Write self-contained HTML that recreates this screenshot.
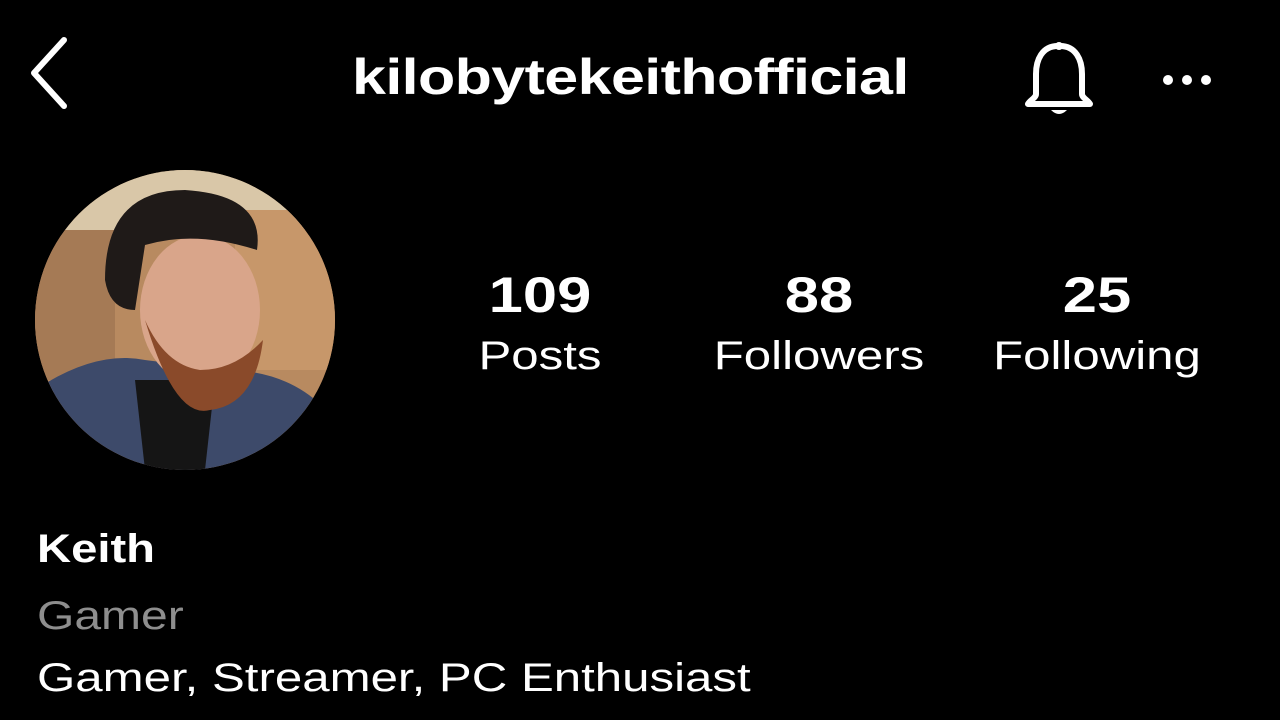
<!DOCTYPE html>
<html><head><meta charset="utf-8"><style>
body{margin:0;width:1280px;height:720px;background:#000;overflow:hidden;font-family:"Liberation Sans",sans-serif;color:#fff;position:relative}
.a{position:absolute;white-space:nowrap}
.s{transform:scaleX(1.22);transform-origin:0 0}
.c{transform:scaleX(1.23);transform-origin:50% 0}
.t{font-weight:bold;font-size:50px;left:352px;top:48px;letter-spacing:-0.5px}
.n{font-weight:bold;font-size:50px;top:266px;text-align:center;width:240px}
.l{font-size:40px;top:334px;text-align:center;width:260px}
</style></head><body>
<svg class="a" style="left:26px;top:36px" width="46" height="74"><path d="M38 4 L8 37 L38 70" stroke="#fff" stroke-width="6" fill="none" stroke-linecap="round" stroke-linejoin="round"/></svg>
<div class="a t s">kilobytekeithofficial</div>
<svg class="a" style="left:1020px;top:38px" width="80" height="82"><path d="M38 8 C22 8 16 22 16 36 L16 56 C16 60 10 62 8 66 L70 66 C68 62 62 60 62 56 L62 36 C62 22 56 8 40 8 Z" stroke="#fff" stroke-width="6" fill="none" stroke-linejoin="round"/><circle cx="39" cy="8" r="4" fill="#fff"/><path d="M31 72 Q39 80 47 72 Z" fill="#fff"/></svg>
<svg class="a" style="left:1160px;top:70px" width="56" height="20"><circle cx="8" cy="10" r="5" fill="#fff"/><circle cx="27" cy="10" r="5" fill="#fff"/><circle cx="46" cy="10" r="5" fill="#fff"/></svg>
<svg class="a" style="left:35px;top:170px" width="300" height="300">
<defs><clipPath id="c"><circle cx="150" cy="150" r="150"/></clipPath></defs>
<g clip-path="url(#c)">
<rect width="300" height="300" fill="#b88a60"/>
<rect x="0" y="0" width="300" height="60" fill="#d9c7a8"/>
<rect x="200" y="40" width="100" height="160" fill="#c7976a"/>
<rect x="0" y="60" width="80" height="150" fill="#a57a55"/>
<path d="M0 220 Q60 180 110 190 L190 200 Q260 200 300 250 L300 300 L0 300 Z" fill="#3d4a6a"/>
<path d="M100 210 L180 210 L170 300 L110 300 Z" fill="#151515"/>
<ellipse cx="165" cy="140" rx="60" ry="75" fill="#d9a58a"/>
<path d="M110 150 Q140 250 175 240 Q220 235 228 170 Q200 200 165 200 Q130 195 110 150 Z" fill="#8a4a2a"/>
<path d="M70 110 Q70 20 150 20 Q230 25 222 80 Q160 60 110 75 L100 140 Q75 140 70 110 Z" fill="#1f1a18"/>
</g></svg>
<div class="a n c" style="left:420px">109</div><div class="a l c" style="left:410px">Posts</div>
<div class="a n c" style="left:699px">88</div><div class="a l c" style="left:689px">Followers</div>
<div class="a n c" style="left:977px">25</div><div class="a l c" style="left:967px">Following</div>
<div class="a s" style="left:37px;top:527px;font-size:40px;font-weight:bold;transform:scaleX(1.18)">Keith</div>
<div class="a s" style="left:37px;top:594px;font-size:40px;color:#8e8e8e;transform:scaleX(1.2)">Gamer</div>
<div class="a s" style="left:37px;top:656px;font-size:40px;transform:scaleX(1.23)">Gamer, Streamer, PC Enthusiast</div>
</body></html>
